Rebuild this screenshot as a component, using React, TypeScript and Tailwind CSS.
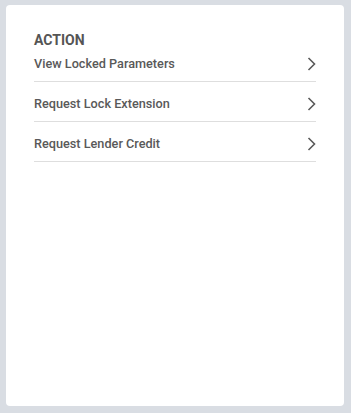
const actions = ["View Locked Parameters", "Request Lock Extension", "Request Lender Credit"];

function Chevron() {
  return (
    <svg width="9" height="14" viewBox="0 0 9 14" fill="none" className="shrink-0">
      <path d="M1.5 1 7.5 7l-6 6" stroke="#5a5a5a" strokeWidth="1.6" />
    </svg>
  );
}

export default function App() {
  return (
    <div className="w-[351px] h-[413px] bg-[#d9dde3] pt-[5px] pl-[6px] font-['Roboto',sans-serif]">
      <div className="w-[338px] h-[401px] bg-white rounded-[4px] px-[28px] pt-[25px]">
        <h2 className="text-[14px] leading-[20px] font-bold text-[#555555]">ACTION</h2>
        <ul>
          {actions.map((a, i) => (
            <li
              key={a}
              className={`flex items-center justify-between border-b border-[#dedede] ${
                i === 0 ? "pt-[4px] pb-[7px]" : "pt-[12px] pb-[7px]"
              }`}
            >
              <span className="text-[12.7px] leading-[20px] font-medium text-[#595959]">{a}</span>
              <Chevron />
            </li>
          ))}
        </ul>
      </div>
    </div>
  );
}
